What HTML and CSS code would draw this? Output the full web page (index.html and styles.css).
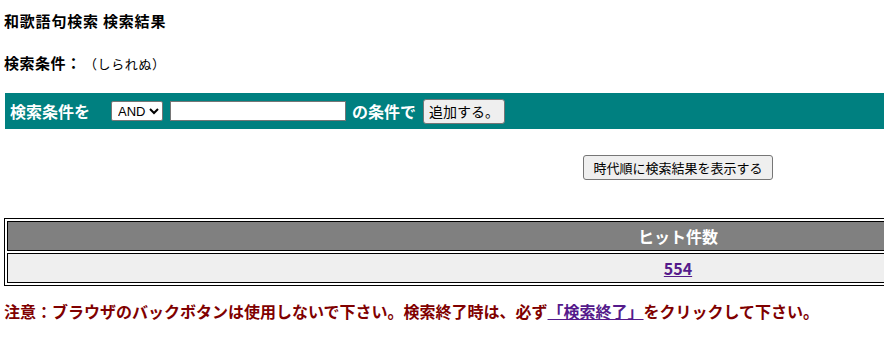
FILE: index.html
```html
<!DOCTYPE html>
<html lang="ja">
<head>
<meta charset="utf-8">
<title>和歌語句検索 検索結果</title>
<link rel="stylesheet" href="styles.css">
</head>
<body>
<div class="page">
  <div class="title">和歌語句検索 検索結果</div>
  <div class="cond"><span class="cond-label">検索条件：</span><span class="cond-val">（しられぬ）</span></div>
  <form class="bar">
    <span class="bar-label">検索条件を</span>
    <select class="sel"><option>AND</option><option>OR</option><option>NOT</option></select>
    <input class="txt" type="text">
    <span class="bar-label2">の条件で</span>
    <button type="button" class="btn">追加する。</button>
  </form>
  <div class="sortrow"><button type="button" class="btn btn-sort">時代順に検索結果を表示する</button></div>
  <table class="hits">
    <tr><th>ヒット件数</th></tr>
    <tr><td><a href="#">554</a></td></tr>
  </table>
  <p class="notice">注意：ブラウザのバックボタンは使用しないで下さい。検索終了時は、必ず<a href="#">「検索終了」</a>をクリックして下さい。</p>
</div>
</body>
</html>
```

FILE: styles.css
```css
html, body {
  margin: 0;
  padding: 0;
  background: #fff;
}
body {
  font-family: "Noto Sans CJK JP", "Noto Sans", sans-serif;
  color: #000;
  overflow: hidden;
}
.page {
  width: 1348px;
  padding: 0 4px;
}
.title {
  font-size: 15px;
  font-weight: bold;
  line-height: 20px;
  margin-top: 11px;
  letter-spacing: 0.8px;
}
.cond {
  margin-top: 21px;
  line-height: 20px;
}
.cond-label {
  font-size: 15px;
  font-weight: bold;
  letter-spacing: 0.5px;
}
.cond-val {
  font-size: 13px;
  margin-left: 9px;
  letter-spacing: 0.6px;
}
.bar {
  margin: 19px 0 0 1px;
  height: 36px;
  background: #008080;
  display: flex;
  align-items: center;
  padding-left: 5px;
}
.bar-label {
  color: #fff;
  font-weight: bold;
  font-size: 16px;
  width: 101px;
}
.bar-label2 {
  color: #fff;
  font-weight: bold;
  font-size: 16px;
  margin: 0 7px 0 6px;
}
.sel {
  width: 52px;
  height: 20px;
  font-family: "Liberation Sans", Arial, sans-serif;
  font-size: 13px;
  border: 1px solid #767676;
  border-radius: 2px;
  background: #fff;
  padding: 0 0 0 2px;
  margin-right: 7px;
}
.txt {
  width: 172px;
  height: 16px;
  border: 1px solid #767676;
  padding: 1px;
  margin: 0;
}
.btn {
  font-family: "Noto Sans CJK JP", sans-serif;
  font-size: 14px;
  height: 25px;
  padding: 0 5px;
  background: #efefef;
  border: 1px solid #767676;
  border-radius: 3px;
  color: #000;
}
.sortrow {
  margin-top: 26px;
  display: flex;
  justify-content: center;
}
.btn-sort {
  width: 190px;
  font-size: 13px;
}
.hits {
  margin-top: 38px;
  width: 1348px;
  border: 1px solid #000;
  border-collapse: separate;
  border-spacing: 2px;
}
.hits th {
  background: #808080;
  color: #fff;
  font-size: 16px;
  font-weight: bold;
  height: 28px;
  padding: 0;
  border: 1px solid #000;
}
.hits td {
  background: #efefef;
  text-align: center;
  font-size: 16px;
  height: 28px;
  padding: 0;
  border: 1px solid #000;
}
.hits td a {
  color: #551a8b;
  font-weight: bold;
}
.notice {
  margin: 14px 0 0;
  color: #800000;
  font-weight: bold;
  font-size: 16px;
  line-height: 22px;
}
.notice a {
  color: #551a8b;
}
```
